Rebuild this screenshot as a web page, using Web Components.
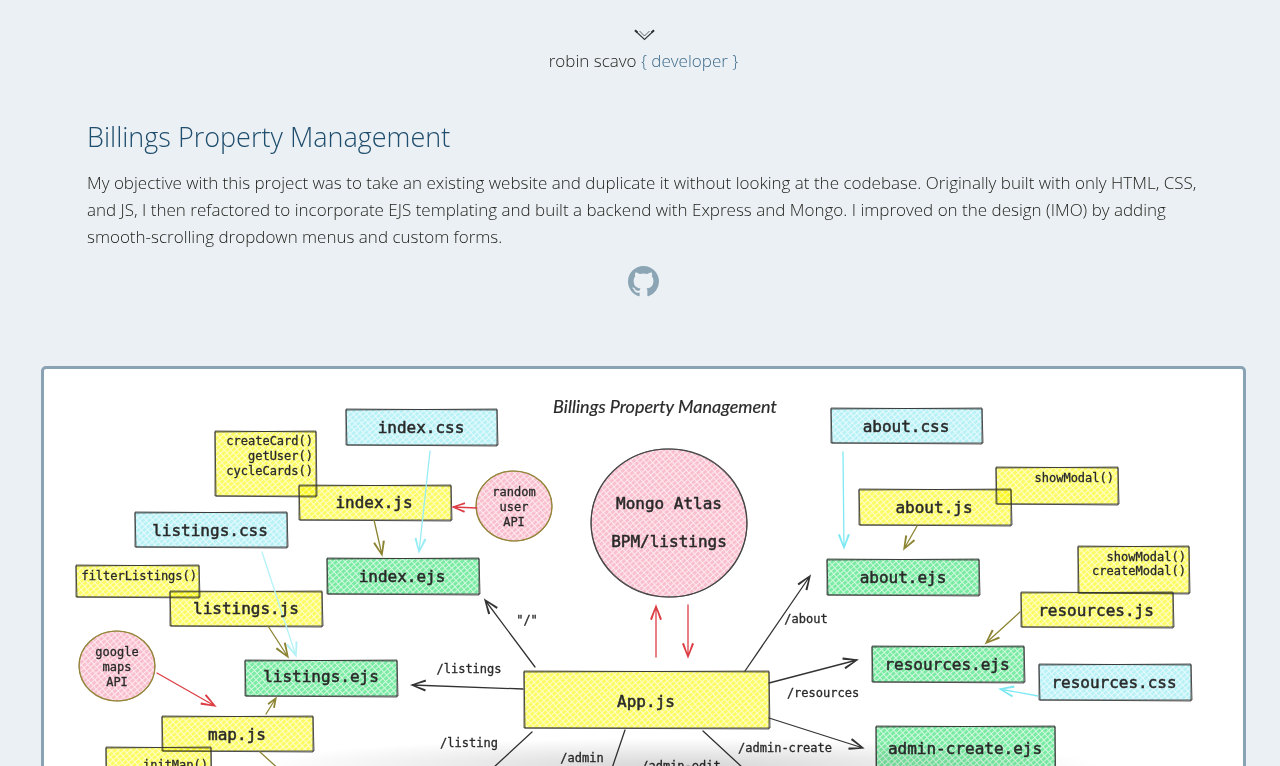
<!DOCTYPE html>
<html lang="en">
<head>
<meta charset="utf-8">
<meta name="viewport" content="width=device-width, initial-scale=1">
<title>Billings Property Management</title>
<style>
html, body { margin: 0; }
body { background: #eaf0f3; color: #1e1e1a; font: 300 17px/27px "Open Sans", "Noto Sans", sans-serif; }
</style>
</head>
<body>
<portfolio-page>
  <site-brand slot="header" href="#home">robin scavo <span slot="role">{ developer }</span></site-brand>
  <project-intro heading="Billings Property Management">
    My objective with this project was to take an existing website and duplicate it without looking at the codebase. Originally built with only HTML, CSS, and JS, I then refactored to incorporate EJS templating and built a backend with Express and Mongo. I improved on the design (IMO) by adding smooth-scrolling dropdown menus and custom forms.
    <github-link slot="link" href="#source"></github-link>
  </project-intro>
  <route-diagram></route-diagram>
</portfolio-page>

<script>
class BaseElement extends HTMLElement {
  constructor() {
    super();
    this.attachShadow({ mode: "open" });
  }
  connectedCallback() { this.shadowRoot.innerHTML = this.render(); }
}

customElements.define("portfolio-page", class extends BaseElement {
  render() {
    return `<style>
      :host { display: block; height: 100vh; overflow: hidden; position: relative; box-sizing: border-box; padding: 0 34px 0 41px; }
      header { padding: 26px 0 0; }
      main { display: block; }
      .shade { position: absolute; left: 20%; right: 14%; bottom: 0; height: 28px; pointer-events: none;
        background: radial-gradient(ellipse 50% 100% at 50% 100%, rgba(0,0,0,.16), rgba(0,0,0,.09) 45%, rgba(0,0,0,0)); }
    </style>
    <header><slot name="header"></slot></header>
    <main><slot></slot></main>
    <div class="shade"></div>`;
  }
});

customElements.define("site-brand", class extends BaseElement {
  render() {
    return `<style>
      :host { display: flex; justify-content: center; }
      a { display: flex; flex-direction: column; align-items: center; color: inherit; text-decoration: none; }
      svg { display: block; width: 22px; height: 16px; margin-bottom: 5px; }
      ::slotted(span) { color: #3f6b8c; }
    </style>
    <a href="${this.getAttribute("href")}">
      <svg viewBox="0 0 22 16" fill="none" stroke="#30343a" aria-hidden="true">
        <path d="M2 4.500 11.500 13.500 21 4.500" stroke-width="1.100"/>
        <path d="M6.500 5 11.500 10 16.500 5" stroke-width=".9" opacity=".8"/>
        <path d="M2 4.300 4.500 6.500M21 4.300 18.500 6.500" stroke-width="2"/>
      </svg>
      <span><slot></slot><slot name="role"></slot></span>
    </a>`;
  }
});

customElements.define("project-intro", class extends BaseElement {
  render() {
    return `<style>
      :host { display: block; padding: 43px 46px 69px; }
      h1 { margin: 0 0 12px; color: #1f4d6d; font-size: 27px; line-height: 40px; font-weight: 300; }
      p { margin: 0; }
      .link { display: flex; justify-content: center; margin-top: 16px; }
    </style>
    <h1>${this.getAttribute("heading")}</h1>
    <p><slot></slot></p>
    <div class="link"><slot name="link"></slot></div>`;
  }
});

customElements.define("github-link", class extends BaseElement {
  render() {
    return `<style>
      :host { display: block; }
      a { display: block; color: #8ca5b5; }
      svg { display: block; width: 31px; height: 31px; }
    </style>
    <a href="${this.getAttribute("href")}" aria-label="GitHub repository">
      <svg viewBox="0 0 16 16" fill="currentColor" aria-hidden="true"><path d="M8 0C3.58 0 0 3.58 0 8c0 3.54 2.29 6.53 5.47 7.59.4.07.55-.17.55-.38 0-.19-.01-.82-.01-1.49-2.01.37-2.53-.49-2.69-.94-.09-.23-.48-.94-.82-1.13-.28-.15-.68-.52-.01-.53.63-.01 1.08.58 1.23.82.72 1.21 1.87.87 2.33.66.07-.52.28-.87.51-1.07-1.78-.2-3.64-.89-3.64-3.95 0-.87.31-1.59.82-2.15-.08-.2-.36-1.02.08-2.12 0 0 .67-.21 2.2.82.64-.18 1.32-.27 2-.27.68 0 1.36.09 2 .27 1.53-1.04 2.2-.82 2.2-.82.44 1.1.16 1.92.08 2.12.51.56.82 1.27.82 2.15 0 3.07-1.87 3.75-3.65 3.95.29.25.54.73.54 1.48 0 1.07-.01 1.93-.01 2.2 0 .21.15.46.55.38A8.013 8.013 0 0016 8c0-4.42-3.58-8-8-8z"/></svg>
    </a>`;
  }
});

/* Canvas content: [fill, left, top, right, bottom] */
const BOXES = [
  ["cyan", 346, 409, 497, 445], ["yellow", 215, 431, 316, 496], ["yellow", 299, 485, 451, 520],
  ["cyan", 135, 512, 287, 547], ["yellow", 76, 565, 199, 597], ["yellow", 170, 591, 322, 626],
  ["green", 327, 558, 479, 594], ["green", 245, 660, 397, 696], ["yellow", 162, 716, 313, 751],
  ["yellow", 106, 747, 211, 800], ["yellow", 524, 671, 769, 728], ["cyan", 831, 408, 982, 443],
  ["yellow", 859, 489, 1011, 525], ["yellow", 996, 467, 1118, 504], ["green", 827, 559, 979, 595],
  ["yellow", 1078, 546, 1189, 593], ["yellow", 1021, 592, 1173, 627], ["green", 872, 646, 1024, 682],
  ["cyan", 1039, 664, 1191, 700], ["green", 876, 726, 1055, 800]
];
/* [outline, centre x, centre y, radius x, radius y] */
const CIRCLES = [["#444", 669, 523, 78, 74], ["#94853a", 514, 506, 38, 35], ["#94853a", 117, 666, 38, 35]];
/* [colour, start x, start y, tip x, tip y, has head] */
const ARROWS = [
  ["#8c8432", 374, 520, 382, 555, 1], ["#98edf5", 430, 451, 419, 552, 1], ["#dc3e45", 477, 508, 453, 507, 1],
  ["#b5f2f7", 262, 552, 296, 656, 1], ["#8c8432", 268, 626, 288, 657, 1], ["#dc3e45", 157, 673, 215, 706, 1],
  ["#8c8432", 266, 714, 276, 698, 1], ["#8c8432", 260, 752, 282, 772, 0],
  ["#333", 535, 667, 485, 600, 1], ["#333", 523, 689, 412, 685, 1], ["#333", 532, 732, 480, 780, 0],
  ["#333", 625, 730, 608, 780, 0], ["#333", 703, 731, 756, 780, 0],
  ["#dc3e45", 656, 657, 656, 606, 1], ["#dc3e45", 688, 605, 688, 657, 1],
  ["#333", 745, 671, 810, 576, 1], ["#333", 769, 683, 857, 660, 1], ["#333", 769, 718, 863, 748, 1],
  ["#7fe9f3", 843, 452, 844, 548, 1], ["#8c8432", 917, 526, 904, 549, 1],
  ["#8c8432", 1020, 612, 986, 643, 1], ["#7fe9f3", 1038, 696, 1000, 689, 1]
];
/* [class, anchor x, baseline, text] */
const LABELS = [
  ["title", 665, 413, "Billings Property Management"],
  ["file", 421, 433, "index.css"], ["file", 374, 508, "index.js"], ["file", 210, 536, "listings.css"],
  ["file", 246, 614, "listings.js"], ["file", 402, 582, "index.ejs"], ["file", 321, 682, "listings.ejs"],
  ["file", 237, 740, "map.js"], ["file", 646, 707, "App.js"], ["file", 906, 432, "about.css"],
  ["file", 934, 513, "about.js"], ["file", 903, 583, "about.ejs"], ["file", 1096, 616, "resources.js"],
  ["file", 947, 670, "resources.ejs"], ["file", 1114, 688, "resources.css"], ["file", 965, 754, "admin-create.ejs"],
  ["file", 669, 509, "Mongo Atlas"], ["file", 669, 547, "BPM/listings"],
  ["fn", 313, 445, "createCard()"], ["fn", 313, 460, "getUser()"], ["fn", 313, 475, "cycleCards()"],
  ["fn", 197, 580, "filterListings()"], ["fn", 208, 769, "initMap()"], ["fn", 1114, 482, "showModal()"],
  ["fn", 1186, 561, "showModal()"], ["fn", 1186, 575, "createModal()"],
  ["note", 514, 496, "random"], ["note", 514, 511, "user"], ["note", 514, 526, "API"],
  ["note", 117, 656, "google"], ["note", 117, 671, "maps"], ["note", 117, 686, "API"],
  ["note", 527, 624, "\"/\""], ["note", 469, 673, "/listings"], ["note", 469, 747, "/listing"],
  ["note", 582, 762, "/admin"], ["note", 681, 770, "/admin-edit"], ["note", 785, 752, "/admin-create"],
  ["note", 823, 697, "/resources"], ["note", 806, 623, "/about"]
];
const FILLS = { cyan: "#b8f1f6", yellow: "#fcfb62", green: "#7aeba2", pink: "#fabfcf" };

customElements.define("route-diagram", class extends BaseElement {
  box([fill, l, t, r, b]) {
    return `<path class="box" fill="url(#${fill})" d="M${l} ${t}H${r}V${b}H${l}Z"/>
      <path class="edge" d="M${l} ${t + 1}L${r} ${t}L${r + 1} ${b}L${l + 1} ${b}ZM${l} ${t}L${r} ${t + 1}L${r} ${b + 1}L${l} ${b}Z"/>`;
  }
  circle([line, x, y, rx, ry]) {
    return `<g stroke="${line}"><ellipse cx="${x}" cy="${y}" rx="${rx}" ry="${ry}" fill="url(#pink)" stroke-width="1.2"/>
      <ellipse cx="${x}" cy="${y}" rx="${rx}" ry="${ry}" fill="none" stroke-width=".8" transform="rotate(8 ${x} ${y})"/></g>`;
  }
  arrow([color, x1, y1, x2, y2, head]) {
    const angle = Math.atan2(y2 - y1, x2 - x1);
    const size = Math.min(14, Math.hypot(x2 - x1, y2 - y1) / 2);
    const wing = a => `${x2 - size * Math.cos(angle + a)} ${y2 - size * Math.sin(angle + a)}`;
    const tip = head ? `M${wing(.38)}L${x2} ${y2}L${wing(-.38)}M${wing(.32)}L${x2} ${y2}L${wing(-.32)}` : "";
    return `<path stroke="${color}" d="M${x1} ${y1}L${x2} ${y2}${tip}"/>`;
  }
  render() {
    const patterns = Object.entries(FILLS).map(([id, color]) => `
      <pattern id="${id}" width="5" height="4" patternUnits="userSpaceOnUse" patternTransform="rotate(-42)">
        <rect width="5" height="4" fill="${color}"/>
        <path d="M0 .5H5M.5 0V4" stroke="#fff" stroke-width="1" opacity=".65"/>
      </pattern>`).join("");
    const labels = LABELS.map(([kind, x, y, text]) => `<text class="${kind}" x="${x}" y="${y}">${text}</text>`).join("");
    return `<style>
      :host { display: block; border: 3px solid #89a3b4; border-radius: 5px; background: #fff; overflow: hidden; }
      svg { display: block; width: 100%; height: auto; }
      .box { mix-blend-mode: multiply; }
      .edge { fill: none; stroke: #333; stroke-width: .8; }
      .arrows { fill: none; stroke-width: 1.3; stroke-linecap: round; }
      text { font-family: "DejaVu Sans Mono", monospace; font-weight: 400; fill: #2a2a2a; stroke: #2a2a2a; stroke-width: .5; text-anchor: middle; }
      .file { font-size: 16px; }
      .fn { font-size: 12px; text-anchor: end; }
      .note { font-size: 12px; }
      .fn, .note { stroke-width: .3; }
      .title { font: italic 400 18px Lato, sans-serif; stroke-width: .2; }
    </style>
    <svg viewBox="44 369 1199 440" role="img" aria-label="Application route diagram">
      <defs>${patterns}</defs>
      <g>${BOXES.map(this.box).join("")}</g>
      <g>${CIRCLES.map(this.circle).join("")}</g>
      <g class="arrows">${ARROWS.map(this.arrow).join("")}</g>
      ${labels}
    </svg>`;
  }
});
</script>
</body>
</html>
